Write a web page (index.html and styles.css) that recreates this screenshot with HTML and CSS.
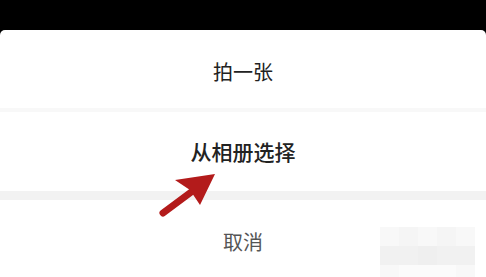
FILE: index.html
```html
<!DOCTYPE html>
<html lang="zh-CN">
<head>
<meta charset="utf-8">
<link rel="stylesheet" href="styles.css">
</head>
<body>
<div class="screen">
  <div class="topbar"></div>
  <div class="sheet">
    <div class="item item-first">拍一张</div>
    <div class="divider"></div>
    <div class="item item-second">从相册选择</div>
    <div class="gap"></div>
    <div class="item item-cancel">取消</div>
  </div>
  <svg class="arrow" width="80" height="60" viewBox="0 0 80 60">
    <line x1="13" y1="53" x2="52" y2="24" stroke="#b31b1b" stroke-width="7" stroke-linecap="round"/>
    <polygon points="65,14 25,20 40,30 50,45" fill="#b31b1b"/>
  </svg>
  <div class="mosaic">
    <span class="m1"></span><span class="m2"></span><span class="m1"></span><span class="m2"></span><span class="m1"></span>
    <span class="m3"></span><span class="m3"></span><span class="m4"></span><span class="m3"></span><span class="m3"></span>
    <span class="m1"></span><span class="m5"></span><span class="m5"></span><span class="m5"></span><span class="m1"></span>
  </div>
</div>
</body>
</html>
```
FILE: styles.css
```css
html, body {
  margin: 0;
  padding: 0;
  background: #000;
}
.screen {
  position: relative;
  width: 486px;
  height: 277px;
  overflow: hidden;
  font-family: "Noto Sans CJK SC", "Noto Sans", sans-serif;
}
.topbar {
  height: 30px;
  background: #000;
}
.sheet {
  background: #fff;
  border-radius: 5px 5px 0 0;
  height: 247px;
  display: flex;
  flex-direction: column;
}
.item {
  display: flex;
  align-items: center;
  justify-content: center;
  font-size: 20px;
  color: #222;
}
.item-first {
  height: 78px;
  padding-top: 4px;
  box-sizing: border-box;
}
.divider {
  height: 4px;
  background: #f8f8f8;
}
.item-second {
  height: 79px;
  font-weight: 500;
  font-size: 21px;
  color: #222;
  padding-bottom: 2px;
  box-sizing: border-box;
}
.gap {
  height: 9px;
  background: #f2f2f2;
}
.item-cancel {
  height: 77px;
  color: #555;
  padding-top: 6px;
  box-sizing: border-box;
}
.arrow {
  position: absolute;
  left: 150px;
  top: 160px;
}
.mosaic {
  position: absolute;
  left: 380px;
  top: 227px;
  display: grid;
  grid-template-columns: repeat(5, 19px);
  grid-template-rows: 19px 19px 12px;
}
.m1 { background: #f8f8f8; }
.m2 { background: #f5f5f5; }
.m3 { background: #f1f1f1; }
.m4 { background: #efefef; }
.m5 { background: #fbfbfb; }
```
